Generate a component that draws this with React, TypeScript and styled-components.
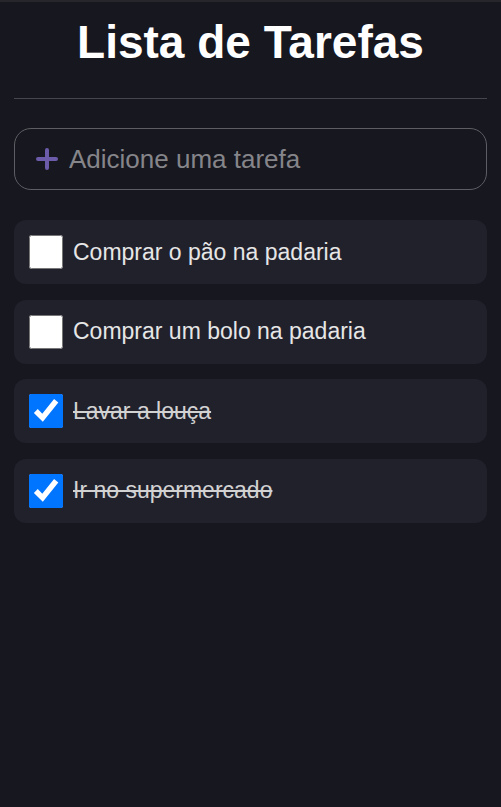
import { useState } from 'react';
import styled, { createGlobalStyle } from 'styled-components';

const GlobalStyle = createGlobalStyle`
    html, body {
        margin: 0;
        padding: 0;
        background: #17171f;
    }
    body {
        font-family: 'Liberation Sans', Arial, sans-serif;
        color: #ffffff;
        border-top: 2px solid #26262b;
        min-height: 805px;
    }
`;

type Task = { id: number; text: string; done: boolean };

const initialTasks: Task[] = [
    { id: 1, text: 'Comprar o pão na padaria', done: false },
    { id: 2, text: 'Comprar um bolo na padaria', done: false },
    { id: 3, text: 'Lavar a louça', done: true },
    { id: 4, text: 'Ir no supermercado', done: true },
];

const App = () => {
    const [tasks, setTasks] = useState<Task[]>(initialTasks);
    const [value, setValue] = useState('');

    const toggle = (id: number) => {
        setTasks(tasks.map((t) => (t.id === id ? { ...t, done: !t.done } : t)));
    };

    const addTask = (e: any) => {
        e.preventDefault();
        if (!value.trim()) return;
        setTasks([...tasks, { id: Date.now(), text: value, done: false }]);
        setValue('');
    };

    return (
        <>
            <GlobalStyle />
            <Container>
                <Title>Lista de Tarefas</Title>
                <Divider />
                <AddArea onSubmit={addTask}>
                    <PlusIcon viewBox='0 0 24 24'>
                        <path
                            d='M12 3v18M3 12h18'
                            stroke='#6c5ba8'
                            strokeWidth='4'
                            strokeLinecap='round'
                        />
                    </PlusIcon>
                    <AddInput
                        placeholder='Adicione uma tarefa'
                        value={value}
                        onChange={(e) => setValue(e.target.value)}
                    />
                </AddArea>
                <List>
                    {tasks.map((task) => (
                        <Item key={task.id}>
                            <Check
                                type='checkbox'
                                checked={task.done}
                                onChange={() => toggle(task.id)}
                            />
                            <Label done={task.done}>{task.text}</Label>
                        </Item>
                    ))}
                </List>
            </Container>
        </>
    );
};

const Container = styled.div`
    padding: 0 14px;
`;

const Title = styled.h1`
    margin: 13px 0 0;
    font-size: 46px;
    font-weight: bold;
    line-height: 55px;
    text-align: center;
    color: #ffffff;
`;

const Divider = styled.hr`
    margin: 28px 0 0;
    border: none;
    border-top: 1px solid #46464c;
`;

const AddArea = styled.form`
    margin-top: 29px;
    height: 62px;
    box-sizing: border-box;
    border: 1px solid #5d5d63;
    border-radius: 17px;
    display: flex;
    align-items: center;
    padding: 0 20px;
    gap: 10px;
`;

const PlusIcon = styled.svg`
    width: 24px;
    height: 24px;
    flex-shrink: 0;
`;

const AddInput = styled.input`
    flex: 1;
    min-width: 0;
    background: transparent;
    border: none;
    outline: none;
    font-family: 'Liberation Sans', Arial, sans-serif;
    font-size: 26px;
    color: #dddddd;
    padding: 0;
    &::placeholder {
        color: #85858a;
    }
`;

const List = styled.div`
    margin-top: 30px;
    display: flex;
    flex-direction: column;
    gap: 15.5px;
`;

const Item = styled.div`
    height: 64px;
    background: #21212c;
    border-radius: 12px;
    display: flex;
    align-items: center;
    padding: 0 15px;
    gap: 10px;
`;

const Check = styled.input`
    width: 34px;
    height: 34px;
    margin: 0;
    flex-shrink: 0;
`;

const Label = styled.span<{ done: boolean }>`
    font-size: 23px;
    color: ${(p) => (p.done ? '#d2d2d2' : '#e6e6e6')};
    text-decoration: ${(p) => (p.done ? 'line-through' : 'none')};
`;

export default App;
